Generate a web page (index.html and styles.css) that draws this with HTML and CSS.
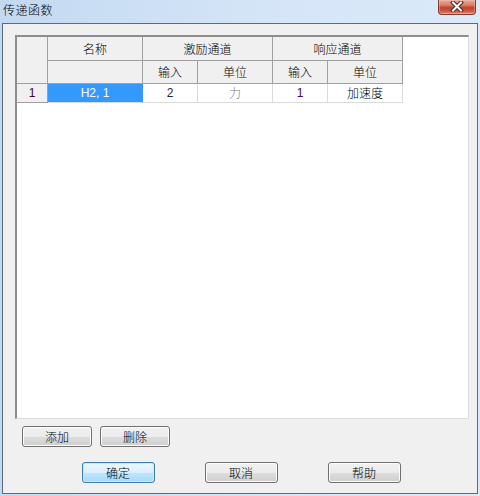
FILE: index.html
```html
<!DOCTYPE html>
<html>
<head>
<meta charset="utf-8">
<link rel="stylesheet" href="styles.css">
</head>
<body>
<div class="window">
  <div class="titlebar">
    <span class="title">传递函数</span>
    <div class="close">
      <svg width="16" height="11" viewBox="0 0 16 11">
        <path d="M4 1.5 L12 9.5 M12 1.5 L4 9.5" stroke="#4a2a28" stroke-width="4" stroke-linecap="square"/>
        <path d="M4 1.5 L12 9.5 M12 1.5 L4 9.5" stroke="#ffffff" stroke-width="2" stroke-linecap="square"/>
      </svg>
    </div>
  </div>
  <div class="client">
    <div class="grid">
      <table class="tbl">
        <colgroup>
          <col class="c0"><col class="c1"><col class="c2"><col class="c3"><col class="c4"><col class="c5">
        </colgroup>
        <tr class="h1">
          <td class="hd corner" rowspan="2"></td>
          <td class="hd">名称</td>
          <td class="hd" colspan="2">激励通道</td>
          <td class="hd" colspan="2">响应通道</td>
        </tr>
        <tr class="h2">
          <td class="hd"></td>
          <td class="hd">输入</td>
          <td class="hd">单位</td>
          <td class="hd">输入</td>
          <td class="hd">单位</td>
        </tr>
        <tr class="dr">
          <td class="hd rowno">1</td>
          <td class="cell sel">H2, 1</td>
          <td class="cell navy">2</td>
          <td class="cell grey">力</td>
          <td class="cell purple">1</td>
          <td class="cell">加速度</td>
        </tr>
      </table>
    </div>
    <div class="btnrow1">
      <button class="btn">添加</button>
      <button class="btn">删除</button>
    </div>
    <div class="btnrow2">
      <button class="btn wide default">确定</button>
      <button class="btn wide">取消</button>
      <button class="btn wide">帮助</button>
    </div>
  </div>
</div>
</body>
</html>
```
FILE: styles.css
```css
html, body {
  margin: 0;
  padding: 0;
}
body {
  width: 480px;
  height: 496px;
  overflow: hidden;
  font-family: "Liberation Sans", "Noto Sans CJK SC", sans-serif;
  font-size: 12px;
  color: #000;
}
.window {
  width: 480px;
  height: 496px;
  background: linear-gradient(to right, #c3d9f1, #d6e6f8 60%, #dbe9f9);
  display: flex;
  flex-direction: column;
  box-sizing: border-box;
}
.titlebar {
  height: 23px;
  display: flex;
  align-items: flex-start;
  flex: none;
}
.title {
  font-family: "Noto Sans CJK SC", sans-serif;
  font-weight: 300;
  font-size: 12px;
  line-height: 14px;
  margin-left: 3px;
  margin-top: 3px;
  letter-spacing: 0.5px;
}
.close {
  margin-left: auto;
  margin-right: 4px;
  width: 38px;
  height: 15px;
  box-sizing: border-box;
  border: 1px solid #8b3a30;
  border-top: none;
  border-radius: 0 0 4px 4px;
  background: linear-gradient(to bottom, #e9a99b 0%, #d9806c 35%, #c2432c 55%, #cc5a42 80%, #e0907a 100%);
  display: flex;
  align-items: center;
  justify-content: center;
  box-shadow: inset 0 0 0 1px rgba(255,210,200,0.35);
}
.close svg {
  display: block;
  margin-top: -1px;
}
.client {
  margin: 0 2px 2px 2px;
  height: 471px;
  box-sizing: border-box;
  border: 1px solid #5f6b77;
  background: #f0f0f0;
  display: flex;
  flex-direction: column;
}
.grid {
  margin: 11px 8px 0 12px;
  height: 384px;
  box-sizing: border-box;
  border-top: 2px solid #8e8e8e;
  border-left: 2px solid #8e8e8e;
  border-right: 1px solid #dcdcdc;
  border-bottom: 1px solid #dcdcdc;
  background: #fff;
}
.tbl {
  border-collapse: separate;
  border-spacing: 0;
  table-layout: fixed;
  width: 386px;
}
.c0 { width: 31px; }
.c1 { width: 95px; }
.c2 { width: 55px; }
.c3 { width: 75px; }
.c4 { width: 55px; }
.c5 { width: 75px; }
.tbl td {
  padding: 0;
  text-align: center;
  box-sizing: border-box;
  white-space: nowrap;
  overflow: hidden;
}
.hd {
  background: #f0f0f0;
  border-right: 1px solid #a0a0a0;
  border-bottom: 1px solid #a0a0a0;
  font-family: "Noto Sans CJK SC", sans-serif;
  font-weight: 300;
}
.h1 td { height: 24px; }
.h2 td { height: 23px; }
.dr td { height: 19px; line-height: 18px; }
.cell {
  border-right: 1px solid #dadada;
  border-bottom: 1px solid #dadada;
  font-family: "Liberation Sans", "Noto Sans CJK SC", sans-serif;
}
.h1 .hd, .h2 .hd {
  line-height: 20px;
}
.rowno {
  font-family: "Liberation Sans", sans-serif;
  color: #400040;
}
.sel {
  background: #3399ff;
  color: #fff;
  border-right-color: #3399ff;
}
.navy { color: #1a1a60; }
.purple { color: #4a0070; }
.grey { color: #808080; font-family: "Noto Sans CJK SC", sans-serif; font-weight: 300; }
.cell:last-child { font-family: "Noto Sans CJK SC", sans-serif; font-weight: 300; }
.btnrow1 {
  display: flex;
  gap: 8px;
  margin: 7px 0 0 19px;
}
.btnrow2 {
  display: flex;
  justify-content: center;
  gap: 50px;
  margin-top: 15px;
  margin-left: 2px;
}
.btn {
  width: 70px;
  height: 21px;
  padding: 0;
  margin: 0;
  box-sizing: border-box;
  border: 1px solid #707070;
  border-radius: 3px;
  background: linear-gradient(to bottom, #f2f2f2 0%, #ebebeb 50%, #dddddd 51%, #cfcfcf 100%);
  box-shadow: inset 0 0 0 1px #fcfcfc;
  font-family: "Noto Sans CJK SC", sans-serif;
  font-weight: 300;
  font-size: 12px;
  line-height: 17px;
  color: #000;
}
.btn.wide {
  width: 73px;
}
.btn.default {
  border-color: #3c7fb1;
  background: linear-gradient(to bottom, #eaf6fd 0%, #d9f0fc 50%, #bee6fd 51%, #a7d9f5 100%);
  box-shadow: inset 0 0 0 1px #c6e8fb;
}
```
